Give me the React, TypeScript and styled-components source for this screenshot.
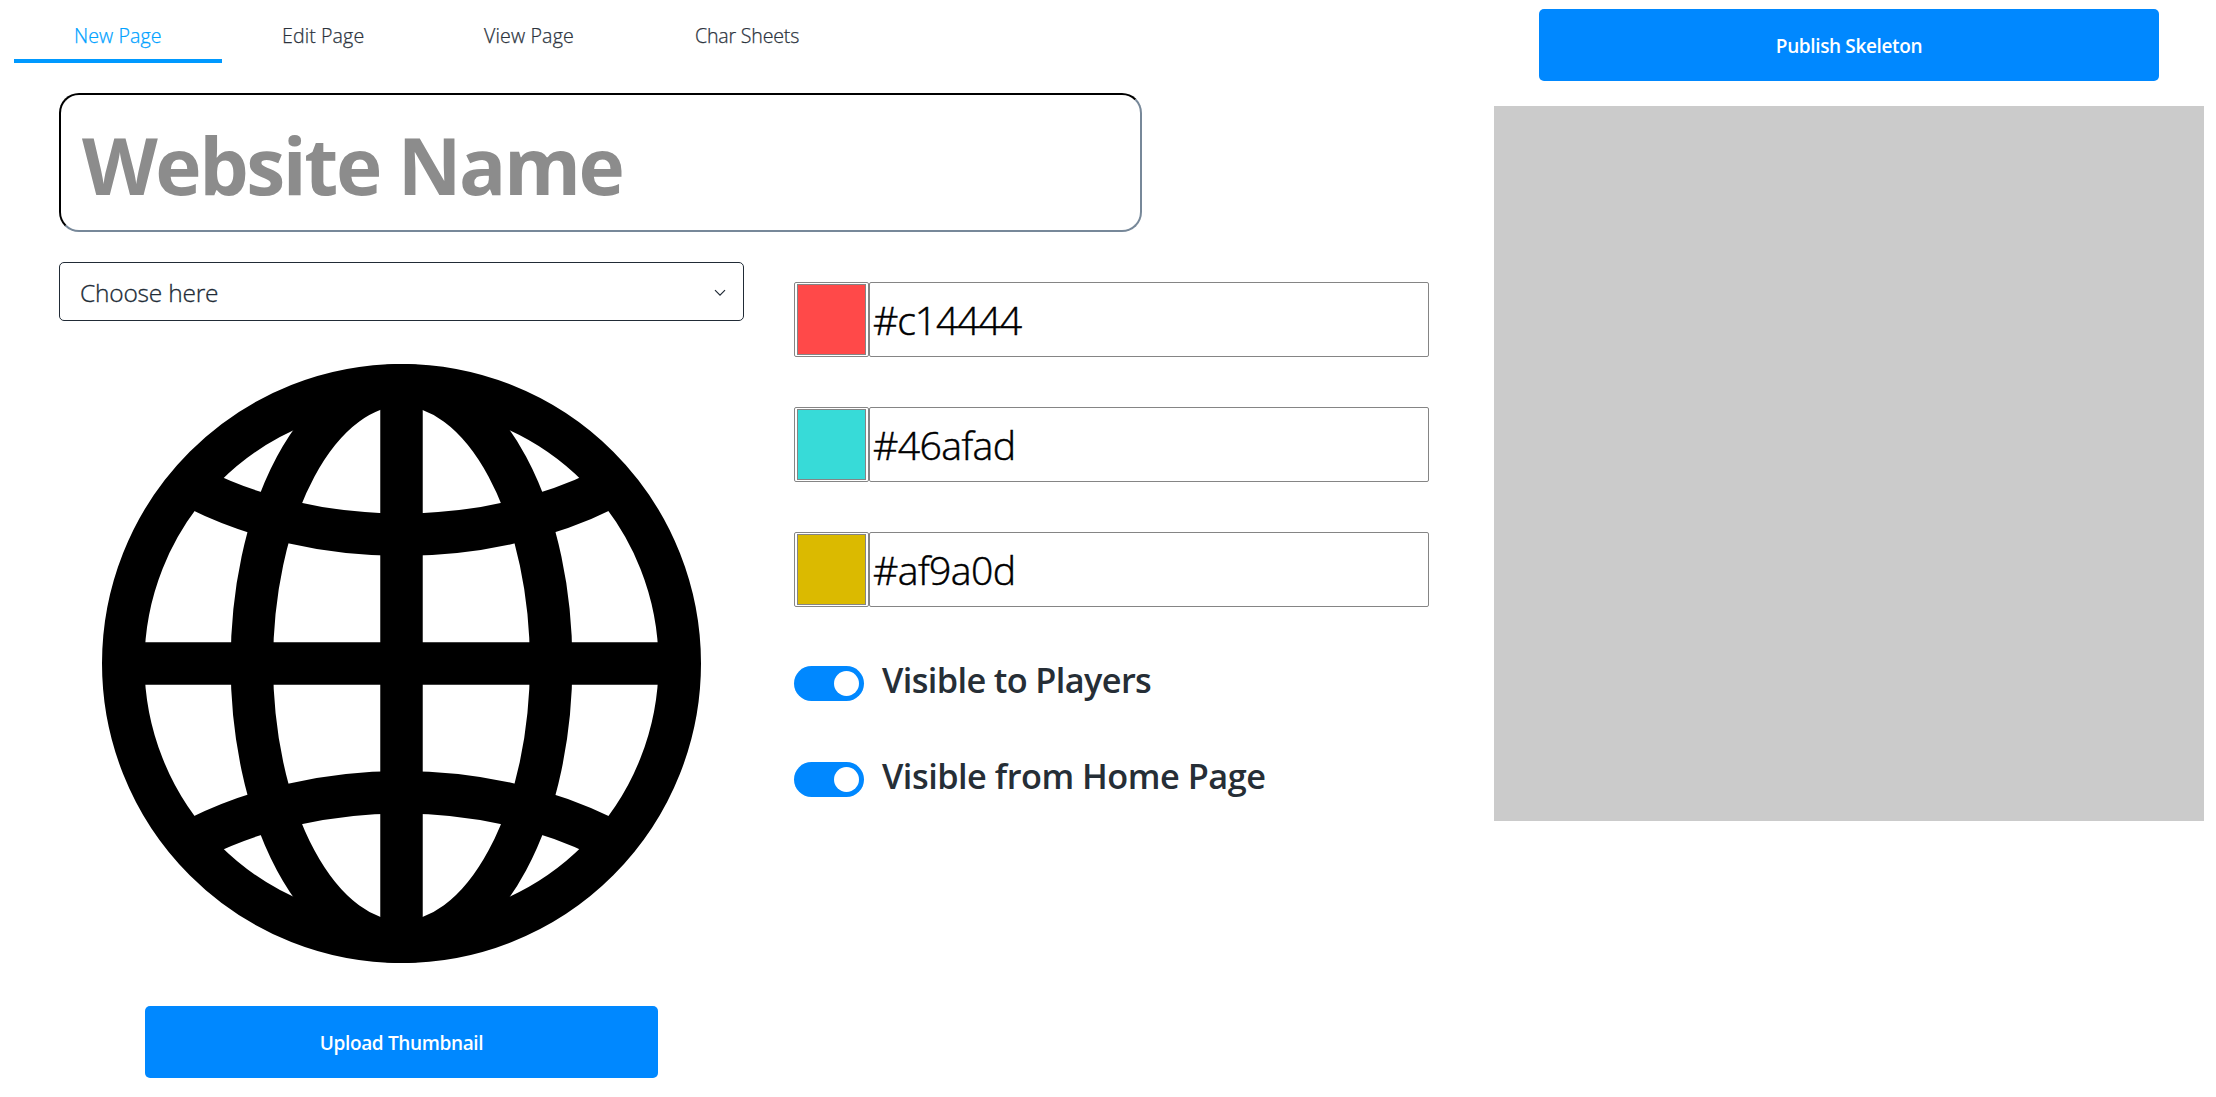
import React from "react";
import styled, { createGlobalStyle } from "styled-components";

const Global = createGlobalStyle`
  * { box-sizing: border-box; }
  body {
    margin: 0;
    background: #fff;
    color: #212b36;
    font-family: "Open Sans", "Noto Sans", sans-serif;
  }
`;

const Page = styled.div`
  display: flex;
  align-items: flex-start;
  width: 2216px;
  height: 1097px;
  overflow: hidden;
`;

const Editor = styled.main`
  width: 1494px;
  flex: none;
`;

const Tabs = styled.nav`
  display: flex;
  height: 63px;
  padding-left: 14px;
`;

const Tab = styled.button<{ $active?: boolean; $width: number; $spacing?: number }>`
  width: ${(p) => p.$width}px;
  padding: 12px 0 0 60px;
  border: 0;
  border-bottom: 4px solid ${(p) => (p.$active ? "#0099ff" : "transparent")};
  background: none;
  color: ${(p) => (p.$active ? "#00a2ff" : "#2b333d")};
  font: 300 19.6px/28px "Open Sans", sans-serif;
  -webkit-text-stroke: 0.25px currentColor;
  letter-spacing: ${(p) => p.$spacing ?? 0}px;
  text-align: left;
  white-space: nowrap;
`;

const NameInput = styled.input`
  display: block;
  width: 1083px;
  height: 139px;
  margin: 30px 0 30px 59px;
  padding: 3px 21px 0;
  border: 2px solid;
  border-color: #000 #778899 #778899 #000;
  border-radius: 20px;
  background: #fff;
  font: 700 78.4px "Open Sans", sans-serif;
  letter-spacing: -2.45px;
  &::placeholder {
    color: #8c8c8c;
    opacity: 1;
  }
`;

const Columns = styled.div`
  display: flex;
  gap: 50px;
  padding-left: 59px;
`;

const ThumbColumn = styled.section`
  display: flex;
  flex-direction: column;
  align-items: center;
  width: 685px;
`;

const Select = styled.button`
  display: flex;
  align-items: center;
  justify-content: space-between;
  width: 685px;
  height: 59px;
  padding: 2px 17px 0 20px;
  border: 1px solid #212b36;
  border-radius: 5px;
  background: #fff;
  color: #212b36;
  font: 300 24.5px "Open Sans", sans-serif;
  -webkit-text-stroke: 0.3px currentColor;
  letter-spacing: -0.2px;
`;

const Globe = styled.svg`
  width: 599px;
  height: 599px;
  margin: 43px 0;
`;

const Primary = styled.button<{ $width: number }>`
  width: ${(p) => p.$width}px;
  height: 72px;
  padding: 2px 0 0;
  border: 0;
  border-radius: 5px;
  background: #0088ff;
  color: #fff;
  font: 600 19px "Open Sans", sans-serif;
  letter-spacing: -0.36px;
`;

const Settings = styled.section`
  display: flex;
  flex-direction: column;
  width: 635px;
  padding-top: 20px;
`;

const ColorRow = styled.div`
  display: flex;
  height: 75px;
  margin-bottom: 50px;
`;

const Well = styled.div`
  width: 75px;
  padding: 1px 2px;
  border: 1px solid #858585;
  border-radius: 2px;
`;

const Swatch = styled.div<{ $color: string }>`
  height: 71px;
  width: 69px;
  border: 1px solid #858585;
  background: ${(p) => p.$color};
`;

const HexInput = styled.input<{ $spacing: number }>`
  width: 560px;
  padding: 0 3px;
  border: 1px solid #858585;
  border-radius: 2px;
  background: #fff;
  color: #000;
  font: 300 39.2px "Open Sans", sans-serif;
  -webkit-text-stroke: 0.5px currentColor;
  letter-spacing: ${(p) => p.$spacing}px;
`;

const Toggles = styled.div`
  display: flex;
  flex-direction: column;
  gap: 61px;
  padding-top: 9px;
`;

const ToggleRow = styled.label`
  display: flex;
  align-items: center;
  gap: 18px;
  height: 35px;
`;

const Track = styled.span`
  display: flex;
  justify-content: flex-end;
  width: 70px;
  height: 35px;
  padding: 5px;
  border-radius: 18px;
  background: #0088ff;
`;

const Knob = styled.span`
  width: 25px;
  height: 25px;
  border-radius: 50%;
  background: #fff;
`;

const ToggleText = styled.span<{ $spacing: number }>`
  font: 600 34.3px/36px "Open Sans", sans-serif;
  color: #262e36;
  letter-spacing: ${(p) => p.$spacing}px;
  margin-top: -7px;
`;

const Preview = styled.aside`
  display: flex;
  flex-direction: column;
  align-items: center;
  width: 710px;
  padding-top: 9px;
`;

const Canvas = styled.div`
  width: 710px;
  height: 715px;
  margin-top: 25px;
  background: #cbcbcb;
`;

const colors = [
  { hex: "#c14444", fill: "#ff4949", spacing: -1.1 },
  { hex: "#46afad", fill: "#37dbd8", spacing: -0.6 },
  { hex: "#af9a0d", fill: "#dbba00", spacing: -0.6 },
];

export default function App() {
  return (
    <>
      <Global />
      <Page>
        <Editor>
          <Tabs>
            <Tab $active $width={208} $spacing={0.1}>New Page</Tab>
            <Tab $width={202} $spacing={0.1}>Edit Page</Tab>
            <Tab $width={211} $spacing={0.15}>View Page</Tab>
            <Tab $width={224} $spacing={-0.2}>Char Sheets</Tab>
          </Tabs>
          <NameInput placeholder="Website Name" />
          <Columns>
            <ThumbColumn>
              <Select>
                <span>Choose here</span>
                <svg width="12" height="8" viewBox="0 0 12 8" fill="none" stroke="#212b36" strokeWidth="1.2">
                  <path d="M1 1.2 6 6.2 11 1.2" />
                </svg>
              </Select>
              <Globe viewBox="54 59 1467 1467" fill="none" stroke="#000" strokeWidth="104">
                <circle cx="787.5" cy="792.5" r="681.5" />
                <ellipse cx="787.5" cy="792.5" rx="366.5" ry="682" />
                <path d="M787.5 100V1485M100 792.5H1475" />
                <path d="M287.5 365A848 583 0 0 0 1287.5 365" />
                <path d="M287.5 1220A848 583 0 0 1 1287.5 1220" />
              </Globe>
              <Primary $width={513}>Upload Thumbnail</Primary>
            </ThumbColumn>
            <Settings>
              {colors.map((c) => (
                <ColorRow key={c.hex}>
                  <Well>
                    <Swatch $color={c.fill} />
                  </Well>
                  <HexInput defaultValue={c.hex} $spacing={c.spacing} />
                </ColorRow>
              ))}
              <Toggles>
                <ToggleRow>
                  <Track><Knob /></Track>
                  <ToggleText $spacing={-0.62}>Visible to Players</ToggleText>
                </ToggleRow>
                <ToggleRow>
                  <Track><Knob /></Track>
                  <ToggleText $spacing={-0.5}>Visible from Home Page</ToggleText>
                </ToggleRow>
              </Toggles>
            </Settings>
          </Columns>
        </Editor>
        <Preview>
          <Primary $width={620}>Publish Skeleton</Primary>
          <Canvas />
        </Preview>
      </Page>
    </>
  );
}
